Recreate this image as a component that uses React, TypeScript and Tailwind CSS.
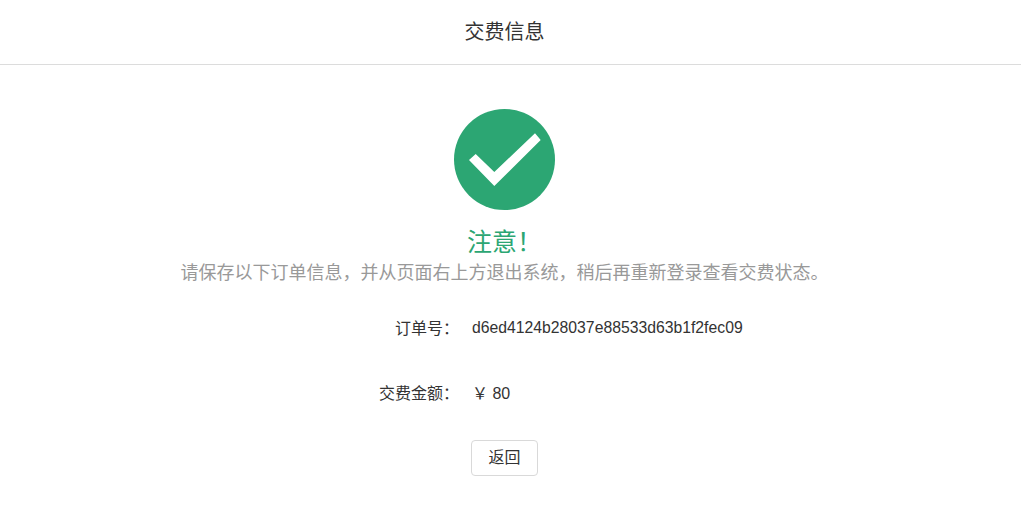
const font = "font-['Liberation_Sans','Noto_Sans_CJK_SC',sans-serif]";

const App = () => {
  return (
    <div className={`${font} w-[1021px] h-[506px] bg-white overflow-hidden`}>
      <header className="h-[65px] border-b border-[#dcdcdc] pr-[12px] flex items-center justify-center text-[20px] text-[#333]">
        交费信息
      </header>

      <main className="pr-[12px] flex flex-col items-center">
        <svg className="mt-[44px] block" width="101" height="101" viewBox="0 0 101 101">
          <circle cx="50.5" cy="50.5" r="50.5" fill="#2ca673" />
          <path d="M21.7 45 L15 51 L40.3 77 L86.7 31 L81 24.3 L40.3 63 Z" fill="#fff" />
        </svg>

        <h2 className="mt-[16px] h-[32px] leading-[32px] text-[25px] text-[#2ca673]">注意！</h2>
        <p className="mt-[2px] h-[26px] leading-[26px] text-[18px] text-[#999]">
          请保存以下订单信息，并从页面右上方退出系统，稍后再重新登录查看交费状态。
        </p>

        <div className="mt-[27px] w-full text-[#333]">
          <div className="h-[32px] flex items-center">
            <span className="w-[459px] text-right text-[16px]">订单号：</span>
            <span className="ml-[13px] pb-[2px] text-[15.75px]">d6ed4124b28037e88533d63b1f2fec09</span>
          </div>
          <div className="mt-[33px] h-[32px] flex items-center">
            <span className="w-[459px] text-right text-[16px]">交费金额：</span>
            <span className="ml-[13px] text-[16px]">￥ 80</span>
          </div>
          <div className="mt-[30px] flex">
            <button className="ml-[471px] w-[67px] h-[36px] rounded-[4px] border border-[#d9d9d9] bg-white text-[16px] text-[#333]">
              返回
            </button>
          </div>
        </div>
      </main>
    </div>
  );
};

export default App;
